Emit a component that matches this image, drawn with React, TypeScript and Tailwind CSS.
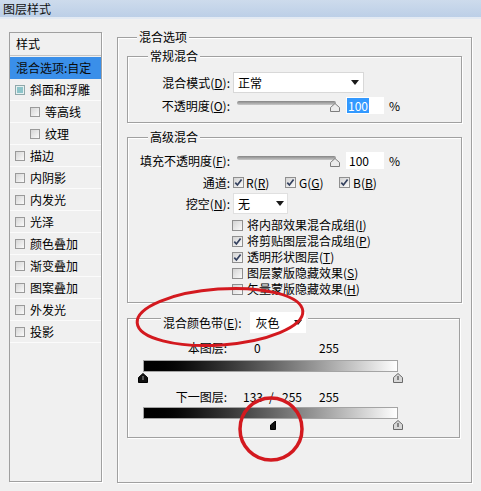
import React from "react";

function Check({ checked = false }: { checked?: boolean }) {
  return (
    <span className="inline-flex w-[11px] h-[11px] shrink-0 items-center justify-center border border-[#8f8f8f] bg-linear-to-br from-[#d4d4d4] to-[#fafafa]">
      {checked && (
        <svg width="9" height="9" viewBox="0 0 9 9">
          <path d="M1.3 4.6 L3.4 7 L7.6 1.4" stroke="#34415f" strokeWidth="1.7" fill="none" />
        </svg>
      )}
    </span>
  );
}

function ListCheck() {
  return (
    <span className="inline-flex w-[10px] h-[10px] shrink-0 border border-[#9a9a9a] bg-linear-to-br from-[#d6d6d6] to-[#fafafa]" />
  );
}

function Arrow() {
  return (
    <svg width="8" height="5" viewBox="0 0 8 5">
      <path d="M0 0 L8 0 L4 5 Z" fill="#1a1a1a" />
    </svg>
  );
}

function Slider() {
  return (
    <div className="relative w-[104px] h-[17px]">
      <div className="absolute left-0 top-[4px] w-[99px] h-[4px] rounded-full bg-linear-to-b from-[#858585] to-[#c9c9c9]" />
      <svg className="absolute left-[93px] top-[6px]" width="10" height="9" viewBox="0 0 10 9">
        <path d="M5 0.5 L9.5 4.5 L9.5 8.5 L0.5 8.5 L0.5 4.5 Z" fill="#ececec" stroke="#7d7d7d" />
      </svg>
    </div>
  );
}

function Thumb({ dark = false }: { dark?: boolean }) {
  return (
    <svg width="10" height="10" viewBox="0 0 10 10">
      <path
        d="M5 0.5 L9.5 4.5 L9.5 9.5 L0.5 9.5 L0.5 4.5 Z"
        fill={dark ? "#111" : "#d8d8d8"}
        stroke={dark ? "#000" : "#6a6a6a"}
      />
      <path d="M5 3 L5 7" stroke={dark ? "#9a9a9a" : "#333"} strokeWidth="1" />
    </svg>
  );
}

function HalfThumb() {
  return (
    <svg width="6" height="9" viewBox="0 0 6 9">
      <path d="M5.5 0 L5.5 8.5 L0.5 8.5 L0.5 4 Z" fill="#111" stroke="#000" />
    </svg>
  );
}

const listItems: { label: string; indent?: boolean }[] = [
  { label: "等高线", indent: true },
  { label: "纹理", indent: true },
  { label: "描边" },
  { label: "内阴影" },
  { label: "内发光" },
  { label: "光泽" },
  { label: "颜色叠加" },
  { label: "渐变叠加" },
  { label: "图案叠加" },
  { label: "外发光" },
  { label: "投影" },
];

export default function App() {
  return (
    <div className="relative w-[481px] h-[491px] overflow-hidden bg-[#f0f0f0] text-[12px] leading-[12px] text-black [font-family:'Noto_Sans_CJK_SC','Noto_Sans',sans-serif]">
      {/* title bar */}
      <div className="h-[17px] flex items-center pl-[3px] bg-linear-to-b from-[#cddbec] to-[#bccfe7] text-[#111]">
        图层样式
      </div>
      <div className="h-[2px] bg-[#e3eaf3]" />

      <div className="flex pl-[9px] pt-[13px]">
        {/* left list */}
        <div className="w-[93px] h-[450px] border border-[#a0a0a0] flex flex-col shadow-[1px_1px_0_#fff]">
          <div className="h-[23px] flex items-center pl-[6px] border-b border-[#c4c4c4]">样式</div>
          <div className="mt-[1px] h-[22px] flex items-center pl-[6px] bg-[#3a8fe9] text-[#0a0a0a]">混合选项:自定</div>
          <div className="h-[22px] flex items-center pl-[5px] gap-[5px] border-b border-[#fbfbfb]">
            <span className="inline-flex w-[10px] h-[10px] shrink-0 items-center justify-center border border-[#8fa8aa] bg-[#e6f0f0]">
              <span className="w-[6px] h-[6px] bg-[#8cc4c9]" />
            </span>
            斜面和浮雕
          </div>
          {listItems.map((it) => (
            <div
              key={it.label}
              className={
                "h-[22px] flex items-center gap-[5px] border-b border-[#fbfbfb] " +
                (it.indent ? "pl-[20px]" : "pl-[5px]")
              }
            >
              <ListCheck />
              {it.label}
            </div>
          ))}
        </div>

        {/* right outer group */}
        <div className="relative ml-[15px] mt-[5px] w-[355px] h-[446px] border border-[#a0a0a0] pl-[9px] pt-[18px] shadow-[inset_1px_1px_0_#fff,1px_1px_0_#fff]">
          <span className="absolute left-[19px] top-[-7px] px-[2px] bg-[#f0f0f0]">混合选项</span>

          {/* 常规混合 */}
          <div className="relative w-[335px] h-[67px] border border-[#a0a0a0] shadow-[inset_1px_1px_0_#fff,1px_1px_0_#fff]">
            <span className="absolute left-[20px] top-[-7px] px-[2px] bg-[#f0f0f0]">常规混合</span>
            <div className="mt-[15px] h-[21px] flex items-center">
              <span className="w-[102px] text-right">
                混合模式(<u>D</u>):
              </span>
              <div className="ml-[3px] w-[131px] h-[21px] bg-white border border-[#d8d8d8] flex items-center justify-between pl-[4px] pr-[4px]">
                <span>正常</span>
                <Arrow />
              </div>
            </div>
            <div className="mt-[4px] h-[17px] flex items-center">
              <span className="w-[102px] text-right">
                不透明度(<u>O</u>):
              </span>
              <div className="ml-[7px]">
                <Slider />
              </div>
              <div className="ml-[5px] w-[38px] h-[17px] bg-white flex items-center pl-[1px]">
                <span className="h-[15px] flex items-center px-[1px] bg-[#3399ff] text-white">100</span>
              </div>
              <span className="ml-[5px]">%</span>
            </div>
          </div>

          {/* 高级混合 */}
          <div className="relative mt-[14px] w-[335px] h-[166px] border border-[#a0a0a0] shadow-[inset_1px_1px_0_#fff,1px_1px_0_#fff]">
            <span className="absolute left-[20px] top-[-7px] px-[2px] bg-[#f0f0f0]">高级混合</span>
            <div className="mt-[14px] h-[17px] flex items-center">
              <span className="w-[102px] text-right">
                填充不透明度(<u>F</u>):
              </span>
              <div className="ml-[7px]">
                <Slider />
              </div>
              <div className="ml-[5px] w-[38px] h-[17px] bg-white flex items-center pl-[3px]">100</div>
              <span className="ml-[5px]">%</span>
            </div>
            <div className="mt-[5px] h-[17px] flex items-center">
              <span className="w-[102px] text-right">通道:</span>
              <div className="ml-[3px] w-[52px] flex items-center gap-[2px]">
                <Check checked />
                <span>
                  R(<u>R</u>)
                </span>
              </div>
              <div className="w-[54px] flex items-center gap-[3px]">
                <Check checked />
                <span>
                  G(<u>G</u>)
                </span>
              </div>
              <div className="flex items-center gap-[3px]">
                <Check checked />
                <span>
                  B(<u>B</u>)
                </span>
              </div>
            </div>
            <div className="mt-[2px] h-[21px] flex items-center">
              <span className="w-[102px] text-right">
                挖空(<u>N</u>):
              </span>
              <div className="ml-[3px] w-[55px] h-[21px] bg-white border border-[#e0e0e0] flex items-center justify-between pl-[4px] pr-[3px]">
                <span>无</span>
                <Arrow />
              </div>
            </div>
            <div className="mt-[3px] flex flex-col pl-[104px]">
              {[
                ["将内部效果混合成组", "I", false],
                ["将剪贴图层混合成组", "P", true],
                ["透明形状图层", "T", true],
                ["图层蒙版隐藏效果", "S", false],
                ["矢量蒙版隐藏效果", "H", false],
              ].map(([t, k, c]) => (
                <div key={t as string} className="h-[16px] flex items-center gap-[4px]">
                  <Check checked={c as boolean} />
                  <span>
                    {t as string}(<u>{k as string}</u>)
                  </span>
                </div>
              ))}
            </div>
          </div>

          {/* 混合颜色带 */}
          <div className="relative mt-[15px] w-[333px] h-[120px] border border-[#a0a0a0] shadow-[inset_1px_1px_0_#fff,1px_1px_0_#fff]">
            <div className="absolute left-[33px] top-[-7px] px-[2px] h-[21px] bg-[#f0f0f0] flex items-center">
              <span>
                混合颜色带(<u>E</u>):
              </span>
              <div className="ml-[8px] w-[56px] h-[21px] bg-white flex items-center justify-between pl-[6px] pr-[4px]">
                <span>灰色</span>
                <Arrow />
              </div>
            </div>

            <div className="mt-[22px] h-[14px] flex items-center">
              <span className="w-[99px] text-right">本图层:</span>
              <span className="ml-[27px] w-[65px]">0</span>
              <span>255</span>
            </div>
            <div className="mt-[5px] ml-[15px] w-[255px] h-[12px] border border-[#a4a4a4] bg-linear-to-r from-black to-white" />
            <div className="relative mt-[1px] h-[11px]">
              <div className="absolute left-[10px] top-0">
                <Thumb dark />
              </div>
              <div className="absolute left-[265px] top-0">
                <Thumb />
              </div>
            </div>

            <div className="mt-[6px] h-[14px] flex items-center">
              <span className="w-[99px] text-right">下一图层:</span>
              <span className="ml-[16px] w-[26px]">133</span>
              <span className="w-[13px]">/</span>
              <span className="w-[37px]">255</span>
              <span>255</span>
            </div>
            <div className="mt-[3px] ml-[15px] w-[255px] h-[12px] border border-[#a4a4a4] bg-linear-to-r from-black to-white" />
            <div className="relative mt-[1px] h-[11px]">
              <div className="absolute left-[142px] top-[1px]">
                <HalfThumb />
              </div>
              <div className="absolute left-[265px] top-0">
                <Thumb />
              </div>
            </div>
          </div>
        </div>
      </div>

      {/* red annotations */}
      <svg className="absolute left-0 top-0 pointer-events-none" width="481" height="491" viewBox="0 0 481 491">
        <ellipse
          cx="220"
          cy="317"
          rx="83"
          ry="28"
          transform="rotate(-4 220 317)"
          fill="none"
          stroke="#d3191f"
          strokeWidth="3"
        />
        <ellipse cx="271" cy="429" rx="31" ry="31" fill="none" stroke="#d3191f" strokeWidth="3.5" />
      </svg>
    </div>
  );
}
